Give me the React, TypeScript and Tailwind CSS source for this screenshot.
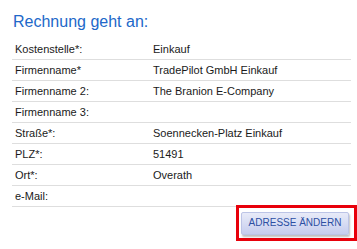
const ROWS: [string, string][] = [
  ['Kostenstelle*:', 'Einkauf'],
  ['Firmenname*', 'TradePilot GmbH Einkauf'],
  ['Firmenname 2:', 'The Branion E-Company'],
  ['Firmenname 3:', ''],
  ['Straße*:', 'Soennecken-Platz Einkauf'],
  ['PLZ*:', '51491'],
  ['Ort*:', 'Overath'],
  ['e-Mail:', ''],
];

export default function App() {
  return (
    <div className="w-[357px] h-[249px] bg-white font-['Liberation_Sans',Arial,sans-serif] overflow-hidden">
      <h2 className="pl-[13px] pt-[13px] text-[16px] leading-[18px] text-[#2168c9]">Rechnung geht an:</h2>

      {/* address table */}
      <div className="ml-[12px] mr-[6px] mt-[8px]">
        {ROWS.map(([label, value]) => (
          <div key={label} className="flex h-[21px] items-center border-b border-[#dedede] text-[11px] text-[#1a1a1a]">
            <span className="w-[141px] pl-[3px]">{label}</span>
            <span>{value}</span>
          </div>
        ))}
      </div>

      <div className="flex justify-end -mt-[2px]">
        <div className="border-[3px] border-[#e8000b] w-[121px] h-[36px] flex items-center pl-[2px]">
          <button className="h-[23px] w-[108px] rounded-[2px] border border-[#bcc4e6] bg-gradient-to-b from-[#e8ebf8] to-[#c6cdee] shadow-[1px_2px_2px_rgba(0,0,0,0.25)] text-[10px] text-[#2c4fa3] leading-none">
            ADRESSE ÄNDERN
          </button>
        </div>
      </div>
    </div>
  );
}
